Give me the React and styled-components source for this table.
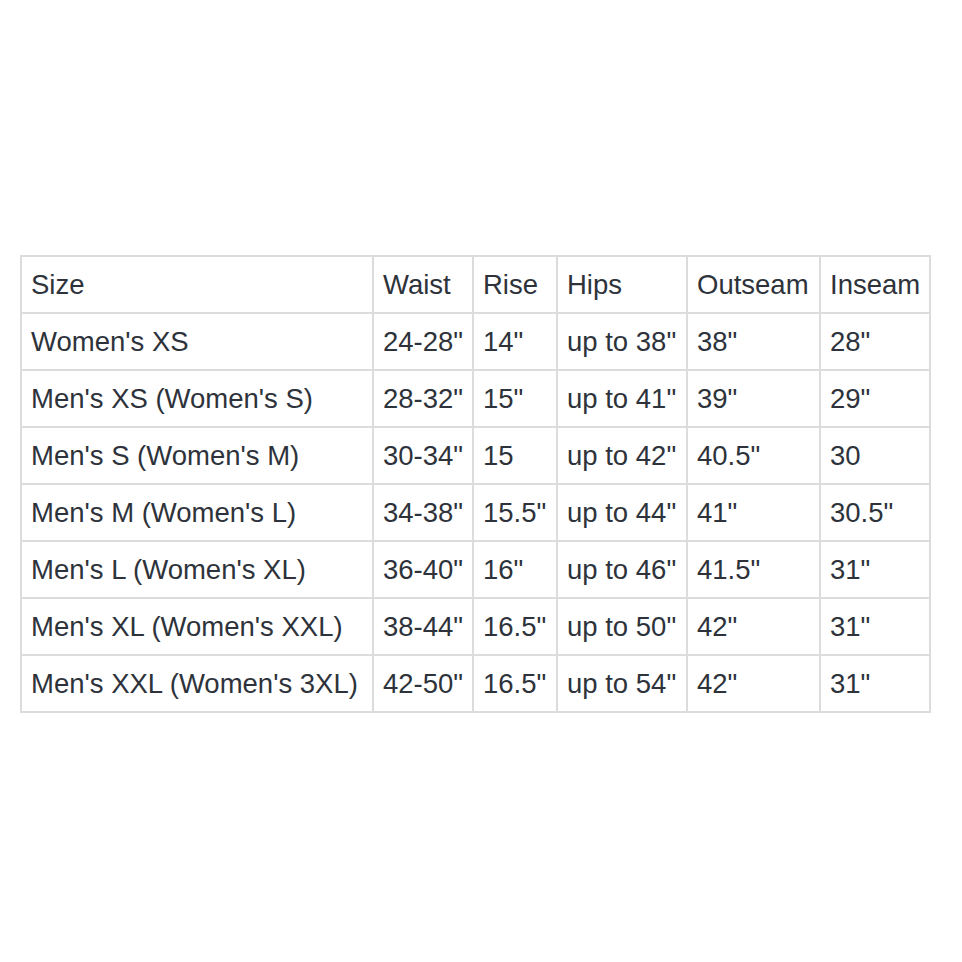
import { createGlobalStyle, styled } from 'styled-components'

const GlobalStyle = createGlobalStyle`
	html, body {
		margin: 0;
		padding: 0;
		background: #ffffff;
	}
	body {
		font-family: "Liberation Sans", Arial, sans-serif;
		color: #2e333b;
	}
`

const Page = styled.main`
	width: 962px;
	height: 962px;
	box-sizing: border-box;
	padding: 255px 0 0 20px;
`

const Table = styled.table`
	border-collapse: collapse;
	table-layout: fixed;
	width: 909px;
	border: 2px solid #dcdcdc;
`

const Cell = styled.td`
	width: ${({ $width }) => $width}px;
	height: 57px;
	box-sizing: border-box;
	padding: 1px 0 0 9px;
	border: 2px solid #dcdcdc;
	font-size: 27.5px;
	line-height: 1;
	white-space: nowrap;
	vertical-align: middle;
	text-align: left;
	font-weight: 400;
`

const widths = [352, 100, 84, 130, 133, 110]

const header = ['Size', 'Waist', 'Rise', 'Hips', 'Outseam', 'Inseam']

const rows = [
	["Women's XS", '24-28"', '14"', 'up to 38"', '38"', '28"'],
	["Men's XS (Women's S)", '28-32"', '15"', 'up to 41"', '39"', '29"'],
	["Men's S (Women's M)", '30-34"', '15', 'up to 42"', '40.5"', '30'],
	["Men's M (Women's L)", '34-38"', '15.5"', 'up to 44"', '41"', '30.5"'],
	["Men's L (Women's XL)", '36-40"', '16"', 'up to 46"', '41.5"', '31"'],
	["Men's XL (Women's XXL)", '38-44"', '16.5"', 'up to 50"', '42"', '31"'],
	["Men's XXL (Women's 3XL)", '42-50"', '16.5"', 'up to 54"', '42"', '31"'],
]

export default function App() {
	return (
		<>
			<GlobalStyle />
			<Page>
				<Table>
					<thead>
						<tr>
							{header.map((h, i) => (
								<Cell as="th" key={h} $width={widths[i]}>
									{h}
								</Cell>
							))}
						</tr>
					</thead>
					<tbody>
						{rows.map((row) => (
							<tr key={row[0]}>
								{row.map((v, i) => (
									<Cell key={i} $width={widths[i]}>
										{v}
									</Cell>
								))}
							</tr>
						))}
					</tbody>
				</Table>
			</Page>
		</>
	)
}
